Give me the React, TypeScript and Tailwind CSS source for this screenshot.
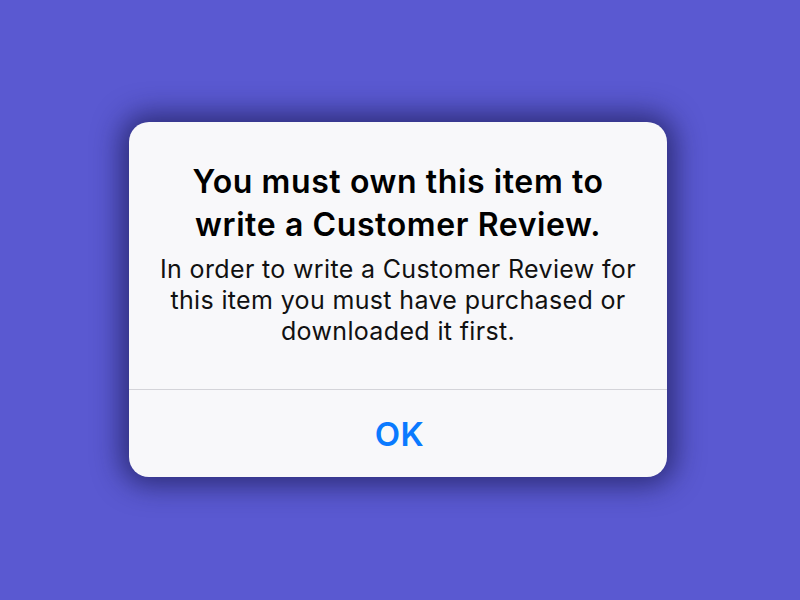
export default function App() {
  return (
    <div className="w-[800px] h-[600px] bg-[#5a59d1] flex items-center justify-center pr-[4px] pb-[2px]" style={{ fontFamily: 'Inter, "Noto Sans", sans-serif' }}>
      <div className="w-[538px] h-[355px] bg-[#f8f8fa] rounded-[20px] shadow-[0_0_28px_8px_rgba(20,20,70,0.65)] flex flex-col overflow-hidden">
        <div className="h-[267px] flex flex-col items-center pt-[38px] px-4 text-center">
          <div className="text-[32px] leading-[43px] font-semibold text-black tracking-[0.6px] whitespace-nowrap">
            You must own this item to<br />write a Customer Review.
          </div>
          <div className="text-[25px] leading-[31px] text-[#111] mt-[8px] tracking-[0.35px] whitespace-nowrap">
            In order to write a Customer Review for<br />this item you must have purchased or<br />downloaded it first.
          </div>
        </div>
        <div className="h-px bg-[#d4d4d9]" />
        <div className="flex-1 flex items-center justify-center pt-[3px] pl-[3px] text-[33px] font-semibold text-[#0a7aff] tracking-[0.5px]">
          OK
        </div>
      </div>
    </div>
  );
}
